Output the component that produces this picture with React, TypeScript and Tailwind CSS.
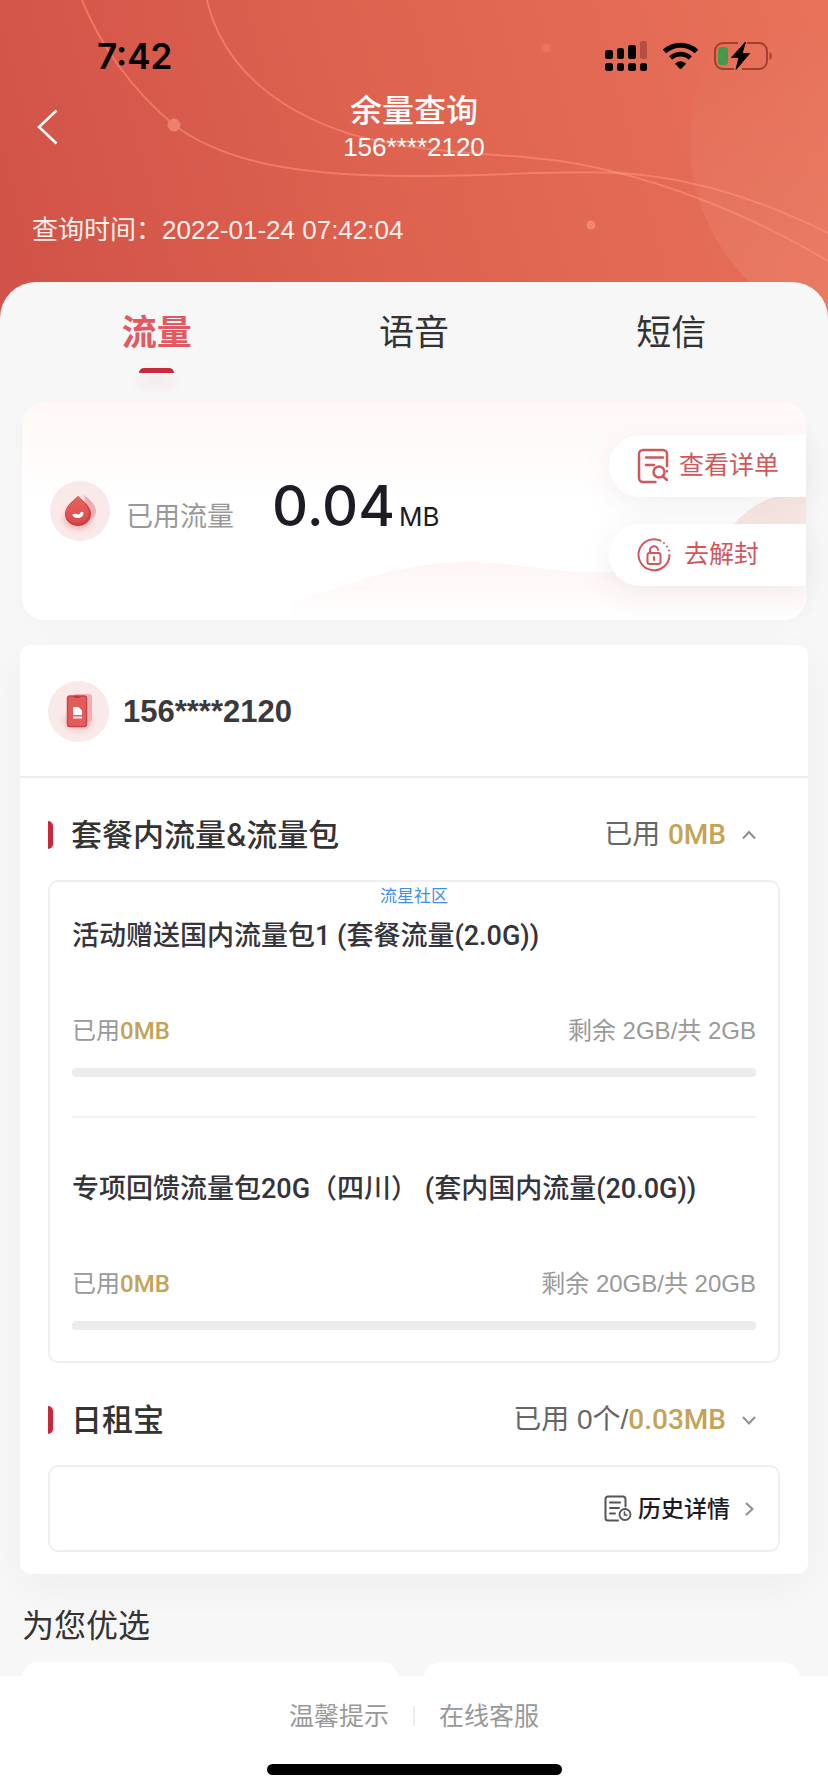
import React from 'react';

interface PackageItem {
  id: number;
  title: string;
  used: string;
  rest: string;
  percent: number;
}

const tabs = ['流量', '语音', '短信'];

const packages: PackageItem[] = [
  { id: 1, title: '活动赠送国内流量包1 (套餐流量(2.0G))', used: '0MB', rest: '剩余 2GB/共 2GB', percent: 0 },
  { id: 2, title: '专项回馈流量包20G（四川） (套内国内流量(20.0G))', used: '0MB', rest: '剩余 20GB/共 20GB', percent: 0 },
];

const StatusIcons: React.FC = () => (
  <svg width="168" height="32" viewBox="604 39 168 32" aria-hidden="true">
    {/* dual sim signal */}
    <rect x="605" y="49" width="8" height="9" rx="2.5" />
    <rect x="617" y="47" width="7" height="11" rx="2.5" />
    <rect x="628" y="44" width="8" height="14" rx="2.5" />
    <rect x="640" y="40" width="7" height="18" rx="2.5" fill="#b4503f" />
    <rect x="605" y="62" width="8" height="8" rx="2.5" />
    <rect x="617" y="62" width="7" height="8" rx="2.5" />
    <rect x="628" y="62" width="8" height="8" rx="2.5" />
    <rect x="640" y="62" width="7" height="8" rx="2.5" />
    {/* wifi */}
    <path d="M664.5 50.5a23.5 23.5 0 0 1 32 0" fill="none" stroke="#000" strokeWidth="5" />
    <path d="M670.7 57a14.3 14.3 0 0 1 19.6 0" fill="none" stroke="#000" strokeWidth="4.6" />
    <path d="M680.5 68l-5-5.3a7.4 7.4 0 0 1 10 0z" stroke="#000" strokeLinejoin="round" />
    {/* battery */}
    <path d="M738 42h-15a8 8 0 0 0-8 8v10a8 8 0 0 0 8 8h11M747 42h12a8 8 0 0 1 8 8v10a8 8 0 0 1-8 8h-17" fill="none" stroke="#a23f2e" strokeWidth="2" />
    <path d="M769.5 51c3 1.5 3 6.500 0 8z" fill="#a23f2e" />
    <rect x="718" y="46" width="10" height="18" rx="3.500" fill="#449a4a" />
    <path d="M745.500 41l-14 15.500h7.500l-3 12 13.500-16h-7.500z" stroke="#000" strokeLinejoin="round" />
  </svg>
);

const HeaderLines: React.FC = () => (
  <svg className="absolute inset-0 h-full w-full" viewBox="0 0 828 318" preserveAspectRatio="none" aria-hidden="true">
    <defs>
      <linearGradient id="ball" x1="0" y1="0" x2="0.2" y2="1">
        <stop offset="0.25" stopColor="#fff" stopOpacity="0" />
        <stop offset="1" stopColor="#ffd2b4" stopOpacity="0.12" />
      </linearGradient>
    </defs>
    <circle cx="890" cy="140" r="200" fill="url(#ball)" />
    <g fill="none" stroke="#ff937c" strokeWidth="2" strokeOpacity="0.55">
      <path d="M82 0C100 45 132 90 174 125C225 163 300 176 414 176C500 176 560 170 620 173C700 178 770 204 828 233" />
      <path d="M207 0C222 65 275 110 350 134C420 154 490 152 560 161C660 176 760 220 828 261" />
    </g>
    <circle cx="174" cy="125" r="6.500" fill="#ec806c" />
    <circle cx="591" cy="225" r="4.500" fill="#f2866f" />
    <circle cx="547" cy="48" r="4.500" fill="#e97260" />
  </svg>
);

const DropIcon: React.FC = () => (
  <svg width="60" height="60" viewBox="0 0 60 60" aria-hidden="true">
    <defs>
      <linearGradient id="drop" x1="0" y1="0" x2="0" y2="1">
        <stop offset="0" stopColor="#e8635f" />
        <stop offset="1" stopColor="#dc4a4b" />
      </linearGradient>
      <filter id="soft" x="-50%" y="-50%" width="200%" height="200%">
        <feGaussianBlur stdDeviation="3" />
      </filter>
    </defs>
    <circle cx="30" cy="30" r="30" fill="#fae9e9" />
    <ellipse cx="28" cy="38" rx="14" ry="10" fill="#ee8f8f" opacity="0.6" filter="url(#soft)" />
    <path d="M34 14c6 4 12 10 12 17-1 4-3 7-7 8z" fill="#ecb0b2" />
    <path d="M28 15C23 20 15 25 15 33a13 12 0 0 0 26 0C41 25 33 20 28 15z" fill="#c94145" />
    <path d="M28 15.500C23 20.500 15.500 25.500 15.500 32.500a11.800 11 0 0 0 23.500 0C39 25.500 33 20.500 28 15.500z" fill="url(#drop)" />
    <path d="M22.500 33.500c3-2 5 1 7-.5 1.500-2.800 3.500-2.500 4-1.500 0 4-2.500 5.500-5.500 5.500-3 0-5.500-1.500-5.500-3.500z" fill="#fff" />
  </svg>
);

const PhoneIcon: React.FC = () => (
  <svg width="61" height="61" viewBox="0 0 61 61" aria-hidden="true">
    <circle cx="30.500" cy="30.500" r="30.500" fill="#fae9e9" />
    <ellipse cx="30" cy="40" rx="14" ry="9" fill="#ee8f8f" opacity="0.5" filter="url(#soft)" />
    <rect x="25" y="13" width="19" height="28" rx="3" fill="#ecb0b2" />
    <rect x="19.500" y="15" width="19" height="30.500" rx="2.500" fill="#e25c5b" stroke="#cd4347" strokeWidth="1.500" />
    <path d="M25 15h8l-1.500 2h-5z" fill="#c23a3e" />
    <path d="M25 26h5.500l3.500 3.500V34h-9z" fill="#fff" />
    <rect x="25" y="35.500" width="9" height="2" fill="#fff" />
  </svg>
);

const DetailIcon: React.FC = () => (
  <svg width="32" height="36" viewBox="0 0 32 36" fill="none" stroke="#d0575b" strokeWidth="2.500" strokeLinecap="round" aria-hidden="true">
    <path d="M18.500 34H6a4 4 0 0 1-4-4V6a4 4 0 0 1 4-4h20a4 4 0 0 1 4 4v12" />
    <path d="M9 9.500h17M9 17h8" />
    <circle cx="22" cy="24" r="5.500" />
    <path d="M26 28.500l4 3.500M30 23v.2" />
  </svg>
);

const LockIcon: React.FC = () => (
  <svg width="34" height="34" viewBox="0 0 34 34" fill="none" stroke="#d0575b" strokeWidth="2" strokeLinecap="round" aria-hidden="true">
    <path d="M23.500 2.700A15.500 15.500 0 1 0 32.500 17" />
    <path d="M27 5v.1M30 8.500v.1M32 12.500v.1" />
    <rect x="10.500" y="15" width="13" height="11" rx="2" />
    <path d="M13 15v-2.500a4 4 0 0 1 8-.5M17 19v3" />
  </svg>
);

const HistoryIcon: React.FC = () => (
  <svg width="28" height="28" viewBox="0 0 28 28" fill="none" stroke="#555" strokeWidth="2" strokeLinecap="round" aria-hidden="true">
    <path d="M14 25.500H4a2.500 2.500 0 0 1-2.500-2.500V4A2.500 2.500 0 0 1 4 1.500h15A2.500 2.500 0 0 1 21.500 4v7.500" />
    <path d="M6 7.500h10M6 13h9M6 18.500h5" />
    <circle cx="21" cy="19.500" r="5.500" strokeWidth="1.800" />
    <path d="M20.500 17v3h2.500" strokeWidth="1.600" />
  </svg>
);

const Chevron: React.FC<{ d: string }> = ({ d }) => (
  <svg width="14" height="14" viewBox="0 0 14 14" fill="none" stroke="#8f8f8f" strokeWidth="2" aria-hidden="true">
    <path d={d} />
  </svg>
);

const SectionHead: React.FC<{ title: string; children: React.ReactNode; open?: boolean }> = ({ title, children, open }) => (
  <div className="flex h-[102px] items-center justify-between pt-3 pr-6">
    <div className="flex items-center">
      <span className="h-7 w-[5px] rounded-r-full bg-[#c9283a]" />
      <h2 className="ml-[18px] font-[Inter,'Noto_Sans_CJK_SC',sans-serif] text-[31px] font-medium leading-10 text-[#333]">{title}</h2>
    </div>
    <button type="button" className="flex items-center gap-4 text-[28px] leading-10 text-[#666]">
      <span>{children}</span>
      <Chevron d={open ? 'M1 10.500l6-6.500 6 6.500' : 'M1 4l6 6.500 6-6.500'} />
    </button>
  </div>
);

const PackageRow: React.FC<{ item: PackageItem }> = ({ item }) => (
  <li className="pb-[39px] pt-[34px] last:border-t-2 last:border-[#f3f3f3] last:pb-[31px] last:pt-[51px]">
    <h3 className="font-[Roboto,'Noto_Sans_CJK_SC',sans-serif] text-[27px] font-medium leading-10 text-[#34343a]">{item.title}</h3>
    <div className="mt-[59px] flex justify-between text-[24px] leading-8 text-[#999]">
      <span>
        已用<span className="font-[Roboto,sans-serif] font-medium text-[#c3a358]">{item.used}</span>
      </span>
      <span>{item.rest}</span>
    </div>
    <div className="mt-[21px] h-[9px] overflow-hidden rounded-[4px] bg-[#ececec]">
      <div className="h-full bg-[#c3a358]" style={{ width: `${item.percent}%` }} />
    </div>
  </li>
);

const Header: React.FC = () => (
  <header className="relative h-[318px] bg-[linear-gradient(75deg,#d05248_0%,#dd624f_45%,#e8725a_100%)] text-white">
    <HeaderLines />
    <div className="relative flex h-[91px] items-center justify-between pl-[97px] pr-14 pt-5 text-black">
      <span className="font-[Inter,sans-serif] text-[35px] font-semibold leading-10">7:42</span>
      <StatusIcons />
    </div>
    <div className="relative grid grid-cols-[96px_1fr_96px] items-center text-center">
      <button type="button" aria-label="返回" className="pl-[37px]">
        <svg width="21" height="36" viewBox="0 0 21 36" fill="none" stroke="#fff" strokeWidth="2.500" aria-hidden="true">
          <path d="M19.500 1.500L2 18l17.500 16.500" />
        </svg>
      </button>
      <div>
        <h1 className="text-[32px] font-medium leading-10">余量查询</h1>
        <p className="text-[26px] leading-8">156****2120</p>
      </div>
    </div>
    <p className="relative mt-[51px] px-8 text-[26px] leading-8 text-[#fff0ea]">查询时间：2022-01-24 07:42:04</p>
  </header>
);

const UsageCard: React.FC = () => (
  <section className="relative mx-[22px] flex h-[218px] items-center justify-between rounded-[22px] bg-[linear-gradient(180deg,#fff8f7_0%,#fff_45%)] pl-7 shadow-[0_4px_20px_rgba(0,0,0,0.02)]">
    <svg className="absolute inset-0 h-full w-full rounded-[22px]" viewBox="0 0 784 218" preserveAspectRatio="none" aria-hidden="true">
      <defs>
        <linearGradient id="wave" x1="0" y1="0" x2="0" y2="1">
          <stop offset="0" stopColor="#fdf3f1" />
          <stop offset="1" stopColor="#fff" />
        </linearGradient>
      </defs>
      <path d="M270 202C340 175 390 160 445 160C500 160 530 172 585 170C650 168 700 150 784 150V218H270z" fill="url(#wave)" />
      <path d="M705 130C725 105 745 92 784 90V130z" fill="#f8e9e4" />
    </svg>
    <div className="relative flex items-center">
      <DropIcon />
      <div className="ml-4 flex items-baseline pb-[6px]">
        <span className="text-[27px] text-[#999]">已用流量</span>
        <span className="ml-[38px] font-[Inter,sans-serif] text-[56px] font-medium leading-none text-[#1c1c26]">0.04</span>
        <span className="ml-1 font-[Inter,sans-serif] text-[26px] text-[#1c1c26]">MB</span>
      </div>
    </div>
    <div className="relative flex w-[197px] flex-col gap-[27px] pb-[2px] text-[25px] text-[#d0575b]">
      <button type="button" className="flex h-[62px] items-center gap-[10px] rounded-l-full bg-white pl-7 shadow-[0_8px_32px_rgba(90,50,50,0.08)]">
        <DetailIcon />
        查看详单
      </button>
      <button type="button" className="flex h-[62px] items-center gap-[13px] rounded-l-full bg-white pl-7 shadow-[0_8px_32px_rgba(90,50,50,0.08)]">
        <LockIcon />
        去解封
      </button>
    </div>
  </section>
);

const App: React.FC = () => {
  return (
    <div className="flex h-screen flex-col bg-[#f7f7f7] font-['Liberation_Sans','Noto_Sans_CJK_SC',sans-serif]">
      <main className="flex-1 overflow-y-auto [scrollbar-width:none]">
        <Header />
        <div className="relative -mt-9 rounded-t-[36px] bg-[#f7f7f7]">
          <nav className="grid h-[120px] grid-cols-3 px-7">
            {tabs.map((tab, index) => (
              <button key={tab} type="button" className="flex flex-col items-center pt-7 text-[35px] leading-[46px] text-[#333]">
                {index === 0 ? <span className="font-bold text-[#e05a60]">{tab}</span> : tab}
                {index === 0 && <span className="mt-3 h-[5px] w-[35px] rounded-t-full bg-[#c62b3d] shadow-[0_10px_14px_rgba(230,60,70,0.2)]" />}
              </button>
            ))}
          </nav>

          <UsageCard />

          <section className="mx-5 mt-[25px] rounded-[10px] bg-white pb-[22px] shadow-[0_12px_40px_rgba(0,0,0,0.04)]">
            <div className="flex h-[133px] items-center gap-[14px] border-b-2 border-[#ededed] pl-7 pt-[2px]">
              <PhoneIcon />
              <span className="text-[31px] font-bold leading-10 text-[#3a3a3c]">156****2120</span>
            </div>
            <div className="px-7">
              <SectionHead title="套餐内流量&流量包" open>
                已用 <span className="font-[Roboto,sans-serif] font-medium text-[#c3a358]">0MB</span>
              </SectionHead>
              <div className="relative rounded-[10px] border-2 border-[#efefef] px-[22px]">
                <span className="absolute inset-x-0 top-[3px] text-center text-[17px] leading-6 text-[#3f8fe8]">流星社区</span>
                <ul>
                  {packages.map((item) => (
                    <PackageRow key={item.id} item={item} />
                  ))}
                </ul>
              </div>

              <SectionHead title="日租宝">
                已用 0个/<span className="font-[Roboto,sans-serif] font-medium text-[#c3a358]">0.03MB</span>
              </SectionHead>
              <div className="flex h-[87px] items-center justify-end rounded-[10px] border-2 border-[#efefef] pr-[22px]">
                <a href="#history" className="flex items-center text-[23px] font-medium leading-8 text-[#1b1b28]">
                  <HistoryIcon />
                  <span className="ml-[6px] mr-3">历史详情</span>
                  <Chevron d="M4 1l6.500 6L4 13" />
                </a>
              </div>
            </div>
          </section>

          <section className="px-[22px]">
            <h2 className="pb-4 pt-8 text-[32px] leading-10 text-[#333]">为您优选</h2>
            <div className="grid grid-cols-2 gap-[26px] pr-[6px]">
              <div className="h-40 rounded-[16px] bg-white" />
              <div className="h-40 rounded-[16px] bg-white" />
            </div>
          </section>
        </div>
      </main>

      <footer className="flex h-[116px] flex-col items-center justify-between bg-white pb-[17px] pt-6">
        <div className="flex items-center text-[25px] leading-8 text-[#999]">
          <a href="#tips">温馨提示</a>
          <span className="mx-6 h-5 w-[2px] bg-[#ececec]" />
          <a href="#service">在线客服</a>
        </div>
        <div className="h-[11px] w-[295px] rounded-full bg-black" />
      </footer>
    </div>
  );
};

export default App;
